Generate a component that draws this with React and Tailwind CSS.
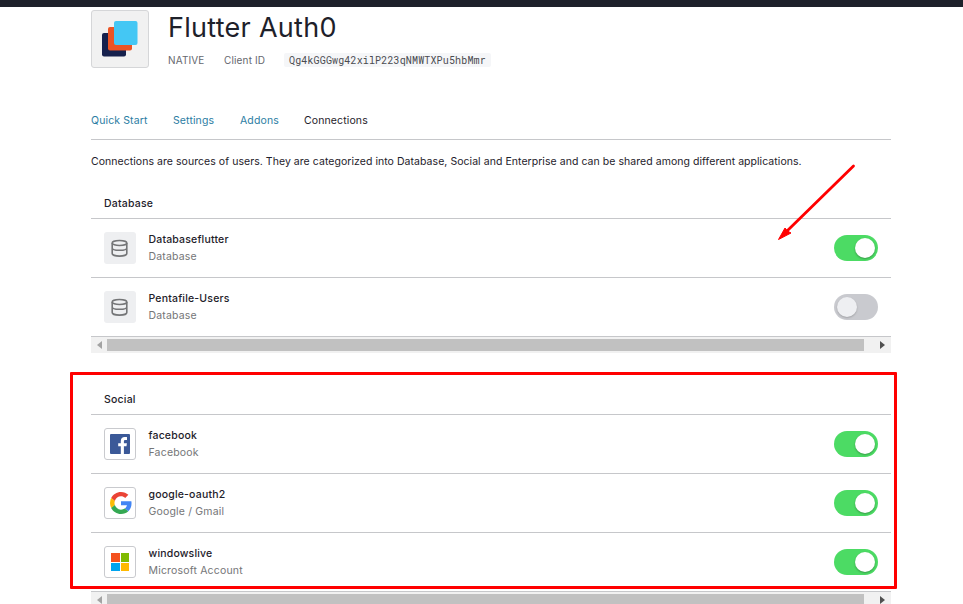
function Toggle({ on }) {
  return (
    <div className={`flex h-[26px] w-11 shrink-0 items-center rounded-full ${on ? "justify-end bg-[#4cdb64] pr-[3.5px]" : "justify-start bg-[#c9cacf] pl-[3px]"}`}>
      <div className={`size-5 rounded-full ${on ? "bg-white shadow-[0_1px_2px_rgba(0,0,0,0.3)]" : "bg-[#eeeff2] shadow-[0_1px_2px_rgba(0,0,0,0.2)]"}`} />
    </div>
  );
}

function DatabaseIcon() {
  return (
    <div className="flex size-8 items-center justify-center rounded-[3px] bg-[#eeeff1]">
      <svg width="18" height="20" viewBox="0 0 18 20" fill="none" stroke="#747577" strokeWidth="1.6">
        <ellipse cx="8.5" cy="5" rx="7.3" ry="2.5" />
        <path d="M1.200 5v10.400c0 1.500 3.200 2.700 7.300 2.700s7.300-1.200 7.300-2.700V5M1.200 10c0 1.500 3.200 2.300 7.300 2.300s7.300-.8 7.300-2.300" />
      </svg>
    </div>
  );
}

function BrandBox({ children }) {
  return <div className="flex size-8 items-center justify-center rounded-[3px] border border-[#c9cace] bg-white">{children}</div>;
}

function FacebookIcon() {
  return (
    <BrandBox>
      <svg width="20" height="20" viewBox="0 0 20 20">
        <rect width="20" height="20" rx="1" fill="#3b5998" />
        <path fill="#fff" d="M10.8 20v-7.7H8.2v-3h2.600V7.100c0-2.600 1.600-4 3.900-4 1.100 0 2 .1 2.300.1v2.700h-1.600c-1.300 0-1.500.6-1.500 1.500v1.900h3l-.4 3h-2.600V20z" />
      </svg>
    </BrandBox>
  );
}

function GoogleIcon() {
  return (
    <BrandBox>
      <svg width="22" height="22" viewBox="0 0 48 48" className="ml-px">
        <path fill="#ea4335" d="M24 9.5c3.54 0 6.71 1.22 9.21 3.6l6.85-6.85C35.9 2.38 30.47 0 24 0 14.62 0 6.51 5.38 2.56 13.22l7.98 6.19C12.43 13.72 17.74 9.5 24 9.5z" />
        <path fill="#4285f4" d="M46.98 24.55c0-1.57-.15-3.09-.38-4.55H24v9.02h12.94c-.58 2.96-2.26 5.48-4.78 7.18l7.73 6c4.51-4.18 7.09-10.36 7.09-17.65z" />
        <path fill="#fbbc05" d="M10.53 28.59A14.5 14.5 0 0 1 9.77 24c0-1.6.27-3.14.76-4.59l-7.98-6.19A23.9 23.9 0 0 0 0 24c0 3.88.92 7.54 2.56 10.78l7.97-6.19z" />
        <path fill="#34a853" d="M24 48c6.48 0 11.93-2.13 15.89-5.81l-7.73-6c-2.15 1.45-4.92 2.3-8.16 2.3-6.26 0-11.57-4.22-13.47-9.91l-7.98 6.19C6.51 42.62 14.62 48 24 48z" />
      </svg>
    </BrandBox>
  );
}

function MicrosoftIcon() {
  return (
    <BrandBox>
      <div className="grid size-[18px] grid-cols-2 gap-px">
        <div className="bg-[#f4511e]" />
        <div className="bg-[#7fba00]" />
        <div className="bg-[#00a4ef]" />
        <div className="bg-[#ffb900]" />
      </div>
    </BrandBox>
  );
}

function Row({ icon, name, kind, on = true }) {
  return (
    <div className="flex h-[59px] items-center justify-between border-b border-[#c6c7ca] px-[13px]">
      <div className="flex items-center gap-[12.5px]">
        {icon}
        <div className="flex flex-col leading-[17px] tracking-[0.18px] whitespace-nowrap">
          <span className="font-medium text-[#1e212a]">{name}</span>
          <span className="text-[#747577]">{kind}</span>
        </div>
      </div>
      <Toggle on={on} />
    </div>
  );
}

function Scrollbar() {
  return (
    <div className="flex h-4 items-center bg-[#f1f1f1]">
      <div className="flex w-4 justify-center">
        <svg width="5" height="8" viewBox="0 0 5 8"><path d="M5 0v8L0 4z" fill="#a3a3a3" /></svg>
      </div>
      <div className="h-3 w-[757px] bg-[#c1c1c1]" />
      <div className="ml-auto flex w-4 justify-center pr-px">
        <svg width="5" height="8" viewBox="0 0 5 8"><path d="M0 0v8l5-4z" fill="#505050" /></svg>
      </div>
    </div>
  );
}

function Heading({ children }) {
  return <h2 className="flex h-[31px] items-end border-b border-[#c6c7ca] pb-[6px] pl-[13px] font-medium leading-4 tracking-[0.2px] text-[#1e212a]">{children}</h2>;
}

export default function App() {
  return (
    <div className="relative h-[604px] w-[963px] overflow-hidden bg-white font-['Inter','Liberation_Sans',sans-serif] text-[10.5px] text-[#1e212a]">
      <div className="h-[7px] bg-[#1e212a]" />
      <main className="ml-[91px] w-[800px] pt-[3px]">
        <header className="flex h-[58px] gap-[19px]">
          <div className="size-[58px] shrink-0 rounded-[3px] border border-[#d5d6d8] bg-[#f1f1f1]">
            <svg width="56" height="56" viewBox="0 0 56 56">
              <rect x="10" y="22" width="24" height="23.5" rx="2" fill="#16214d" />
              <rect x="16" y="16" width="24" height="23.5" rx="2" fill="#eb5424" />
              <rect x="22" y="10" width="23.5" height="24" rx="2" fill="#44c7f4" />
            </svg>
          </div>
          <div>
            <h1 className="h-[43px] text-[27px] leading-[35px] tracking-[0.28px] whitespace-nowrap">Flutter Auth0</h1>
            <div className="flex h-[14px] items-center text-[10px] tracking-[0.15px] text-[#65676e]">
              <span className="w-14 pt-px whitespace-nowrap">NATIVE</span>
              <span className="w-[60px] pt-px whitespace-nowrap">Client ID</span>
              <code className="flex h-[14px] w-[207px] items-center rounded-[2px] bg-[#f5f6f8] pl-[5px] font-['Roboto_Mono','Liberation_Mono',monospace] text-[10px] tracking-[0.15px] text-[#4a4b50]">Qg4kGGGwg42xilP223qNMWTXPu5hbMmr</code>
            </div>
          </div>
        </header>
        <nav className="mt-[43px] flex h-[29px] border-b border-[#c6c7ca] leading-[19px] tracking-[0.12px] whitespace-nowrap text-[#2c7da3]">
          <span className="w-[82px]">Quick Start</span>
          <span className="w-[67px]">Settings</span>
          <span className="w-16">Addons</span>
          <span className="text-[#1e212a]">Connections</span>
        </nav>
        <p className="mt-[13px] h-[42px] leading-[18px] tracking-[0.05px] whitespace-nowrap">
          Connections are sources of users. They are categorized into Database, Social and Enterprise and can be shared among different applications.
        </p>
        <section className="-mt-[7px]">
          <Heading>Database</Heading>
          <Row icon={<DatabaseIcon />} name="Databaseflutter" kind="Database" />
          <Row icon={<DatabaseIcon />} name="Pentafile-Users" kind="Database" on={false} />
          <Scrollbar />
        </section>
        <section className="mt-[31px]">
          <Heading>Social</Heading>
          <Row icon={<FacebookIcon />} name="facebook" kind="Facebook" />
          <Row icon={<GoogleIcon />} name="google-oauth2" kind="Google / Gmail" />
          <Row icon={<MicrosoftIcon />} name="windowslive" kind="Microsoft Account" />
          <Scrollbar />
        </section>
      </main>
      <div className="pointer-events-none absolute top-[372px] left-[70px] h-[217px] w-[827px] rounded-[1px] border-3 border-[#ff0000]" />
      <svg className="pointer-events-none absolute top-[160px] left-[770px]" width="90" height="85" viewBox="0 0 90 85">
        <path d="M83.500 6L17 71" stroke="#f00" strokeWidth="2.8" strokeLinecap="round" />
        <path d="M8.500 79.500L15 68L17.500 71L21 73z" fill="#f00" stroke="#f00" />
      </svg>
    </div>
  );
}
